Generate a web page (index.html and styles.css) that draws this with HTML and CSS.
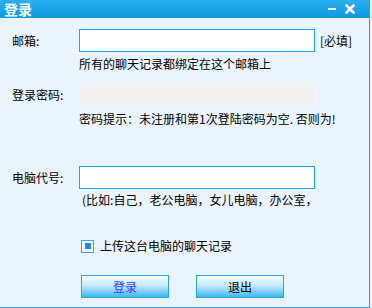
FILE: index.html
```html
<!DOCTYPE html>
<html lang="zh-CN">
<head>
<meta charset="utf-8">
<title>登录</title>
<link rel="stylesheet" href="styles.css">
</head>
<body>
<div class="window">
  <div class="titlebar">
    <span class="title">登录</span>
    <span class="controls">
      <span class="min"></span>
      <svg class="close" width="10" height="10" viewBox="0 0 10 10"><path d="M1.5 1.5 L8.5 8.5 M8.5 1.5 L1.5 8.5" stroke="#fff" stroke-width="2.6" stroke-linecap="square"/></svg>
    </span>
  </div>
  <div class="content">
    <div class="row row-email">
      <label class="label">邮箱:</label>
      <div class="input"></div>
      <span class="req">[必填]</span>
    </div>
    <div class="hint hint-email">所有的聊天记录都绑定在这个邮箱上</div>
    <div class="row row-pass">
      <label class="label">登录密码:</label>
      <div class="input disabled"></div>
    </div>
    <div class="hint hint-pass">密码提示：未注册和第1次登陆密码为空. 否则为!</div>
    <div class="row row-pc">
      <label class="label">电脑代号:</label>
      <div class="input"></div>
    </div>
    <div class="hint hint-pc">(比如:自己，老公电脑，女儿电脑，办公室，</div>
    <div class="check-row">
      <span class="checkbox"><span class="mark"></span></span>
      <span class="check-label">上传这台电脑的聊天记录</span>
    </div>
    <div class="buttons">
      <div class="btn btn-login">登录</div>
      <div class="btn btn-exit">退出</div>
    </div>
  </div>
</div>
</body>
</html>
```
FILE: styles.css
```css
html, body {
  margin: 0;
  padding: 0;
  background: #f0f0f0;
}
body {
  font-family: "Noto Sans CJK SC", "DejaVu Sans", sans-serif;
  font-size: 12px;
  color: #000;
}
.window {
  width: 369px;
  height: 307px;
  background: #eaf4fe;
  border-right: 1px solid #22a6ea;
  border-bottom: 1px solid #22a6ea;
  display: flex;
  flex-direction: column;
}
.titlebar {
  height: 18px;
  background: linear-gradient(#2db0f0, #0b98de);
  display: flex;
  align-items: center;
  justify-content: space-between;
  padding: 0 14px 0 4px;
}
.title {
  color: #fff;
  font-weight: bold;
  font-size: 14px;
  line-height: 18px;
  letter-spacing: 0px;
}
.controls {
  display: flex;
  align-items: center;
  gap: 9px;
}
.min {
  width: 8px;
  height: 2px;
  background: #fff;
  margin-top: 0px;
}
.close {
  display: block;
}
.content {
  display: flex;
  flex-direction: column;
  padding-left: 12px;
}
.row {
  display: flex;
  align-items: center;
}
.label {
  width: 67px;
  font-size: 12px;
  line-height: 14px;
}
.input {
  width: 234px;
  height: 21px;
  background: #fff;
  border: 1px solid #1aa6ee;
}
.input.disabled {
  background: #f0f0f0;
  border-color: #f6f6f6;
  height: 20px;
}
.req {
  margin-left: 5px;
  line-height: 14px;
}
.row-email { margin-top: 11px; }
.hint {
  margin-left: 67px;
  line-height: 14px;
}
.hint-email { margin-top: 5px; }
.row-pass { margin-top: 13px; }
.hint-pass { margin-top: 6px; }
.row-pc { margin-top: 40px; }
.hint-pc { margin-top: 4px; padding-left: 3px; }
.check-row {
  display: flex;
  align-items: center;
  margin-left: 69px;
  margin-top: 32px;
}
.checkbox {
  width: 11px;
  height: 11px;
  border: 1px solid #3aa8e6;
  background: #f4faff;
  display: flex;
  align-items: center;
  justify-content: center;
}
.mark {
  width: 6px;
  height: 6px;
  background: #1b8fe0;
}
.check-label {
  margin-left: 6px;
  line-height: 14px;
}
.buttons {
  display: flex;
  margin-left: 69px;
  margin-top: 22px;
  gap: 27px;
}
.btn {
  width: 86px;
  height: 21px;
  border: 1px solid #22a8ec;
  background: linear-gradient(#f6fcff 0%, #c6ebfd 45%, #40b6f2 100%);
  display: flex;
  align-items: center;
  justify-content: center;
  font-size: 12px;
}
.btn-login { color: #3a3aff; }
.btn-exit { color: #000; }
```
